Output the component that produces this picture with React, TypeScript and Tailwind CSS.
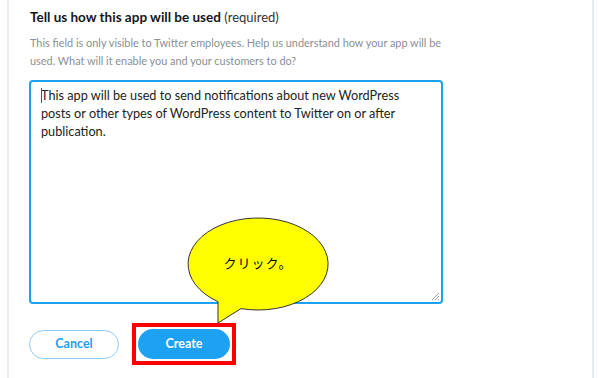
import React from "react";

export default function App() {
  return (
    <div className="relative w-[599px] h-[378px] bg-white overflow-hidden" style={{ fontFamily: "Lato, 'Liberation Sans', sans-serif" }}>
      <div className="ml-[7px] w-[587px] h-full border-l-2 border-r-2 border-[#e6ecf0] pl-[20px] pt-[7px]">
        <div className="text-[13.5px] leading-[20px] text-[#14171a] pl-[1px]">
          <span className="font-bold">Tell us how this app will be used</span>{" "}
          <span className="text-[#333] text-[13px]">(required)</span>
        </div>
        <div className="mt-[7px] text-[10.9px] leading-[18px] text-[#8a9096] pl-[1px]">
          <div>This field is only visible to Twitter employees. Help us understand how your app will be</div>
          <div>used. What will it enable you and your customers to do?</div>
        </div>
        <div className="relative mt-[10px] w-[414px] h-[224px] border-2 border-[#1da1f2] rounded-[4px] pl-[10px] pt-[4px] text-[12.7px] leading-[18px] text-[#222]">
          <span className="absolute left-[10px] top-[6px] w-px h-[15px] bg-[#555]" />
          <div>This app will be used to send notifications about new WordPress</div>
          <div>posts or other types of WordPress content to Twitter on or after</div>
          <div>publication.</div>
          <svg className="absolute right-[1px] bottom-[1px]" width="9" height="9" viewBox="0 0 9 9">
            <line x1="8" y1="1" x2="1" y2="8" stroke="#a0a0a0" strokeWidth="1" />
            <line x1="8" y1="4" x2="4" y2="8" stroke="#a0a0a0" strokeWidth="1" />
            <line x1="8" y1="7" x2="7" y2="8" stroke="#a0a0a0" strokeWidth="1" />
          </svg>
        </div>
        <div className="mt-[19px] flex items-center gap-[13px]">
          <button className="w-[90px] h-[29px] rounded-full border border-[#8ecdf8] bg-white text-[#1da1f2] font-bold text-[12.5px]">
            Cancel
          </button>
          <div className="border-[4px] border-[#ff0000] p-[2px]">
            <button className="block w-[92px] h-[30px] rounded-full bg-[#1da1f2] text-white font-bold text-[12.5px]">
              Create
            </button>
          </div>
        </div>
      </div>
      <svg className="absolute left-[180px] top-[210px]" width="160" height="120" viewBox="0 0 160 120">
        <path d="M 61 98.6 L 38 113 L 38 91.7 A 70 46 0 1 1 61 98.6 Z" fill="#ffff00" stroke="#333" strokeWidth="1" />
      </svg>
      <div
        className="absolute left-[188px] top-[254px] w-[140px] text-center text-[13px] leading-[18px] text-black"
        style={{ fontFamily: "'Noto Sans CJK JP', sans-serif", letterSpacing: "1px" }}
      >
        クリック。
      </div>
    </div>
  );
}
